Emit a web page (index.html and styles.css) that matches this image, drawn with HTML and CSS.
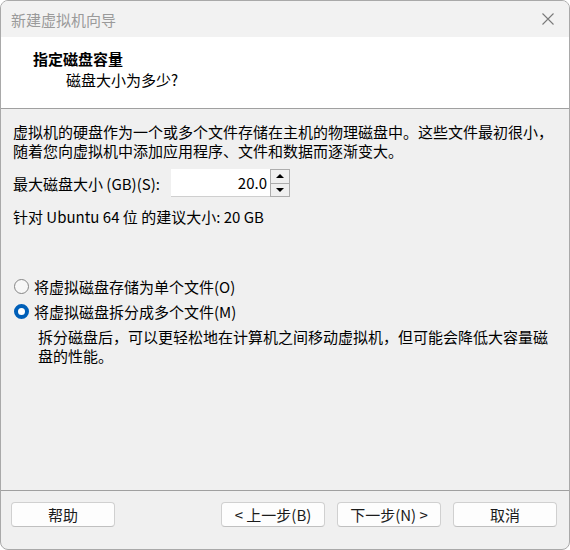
FILE: index.html
```html
<!DOCTYPE html>
<html lang="zh-CN">
<head>
<meta charset="utf-8">
<title>新建虚拟机向导</title>
<link rel="stylesheet" href="styles.css">
</head>
<body>
<div class="window">
  <div class="titlebar">
    <span class="title">新建虚拟机向导</span>
    <svg class="close" width="12" height="12" viewBox="0 0 12 12"><path d="M0.5 0.5 L11.5 11.5 M11.5 0.5 L0.5 11.5" stroke="#7a7a7a" stroke-width="1.1" fill="none"/></svg>
  </div>
  <div class="header">
    <div class="h-title">指定磁盘容量</div>
    <div class="h-sub">磁盘大小为多少?</div>
  </div>
  <div class="content">
    <p class="intro">虚拟机的硬盘作为一个或多个文件存储在主机的物理磁盘中。这些文件最初很小，<br>随着您向虚拟机中添加应用程序、文件和数据而逐渐变大。</p>
    <div class="size-row">
      <span class="size-label">最大磁盘大小 (GB)(S):</span>
      <div class="spin">
        <div class="spin-input">20.0</div>
        <div class="spin-btns">
          <div class="spin-btn"><span class="tri-up"></span></div>
          <div class="spin-btn"><span class="tri-down"></span></div>
        </div>
      </div>
    </div>
    <p class="rec">针对 Ubuntu 64 位 的建议大小: 20 GB</p>
    <div class="options">
      <div class="option"><span class="radio"></span><span>将虚拟磁盘存储为单个文件(O)</span></div>
      <div class="option"><span class="radio checked"></span><span>将虚拟磁盘拆分成多个文件(M)</span></div>
    </div>
    <p class="desc">拆分磁盘后，可以更轻松地在计算机之间移动虚拟机，但可能会降低大容量磁<br>盘的性能。</p>
  </div>
  <div class="footer">
    <div class="btn">帮助</div>
    <div class="btn push">&lt; 上一步(B)</div>
    <div class="btn">下一步(N) &gt;</div>
    <div class="btn">取消</div>
  </div>
</div>
</body>
</html>
```
FILE: styles.css
```css
html, body {
  margin: 0;
  padding: 0;
  background: #ffffff;
}
body {
  font-family: "Noto Sans CJK SC", "Noto Sans", sans-serif;
  font-size: 15px;
  line-height: 19px;
  color: #000;
}
p { margin: 0; }
.window {
  width: 570px;
  height: 550px;
  box-sizing: border-box;
  border: 1px solid #a9a9a9;
  border-radius: 8px;
  overflow: hidden;
  background: #f0f0f0;
  display: flex;
  flex-direction: column;
}
.titlebar {
  height: 36px;
  flex: none;
  display: flex;
  align-items: center;
  justify-content: space-between;
  padding: 0 15px 0 10px;
  background: #f2f2f2;
}
.title {
  color: #9a9a9a;
}
.close { display: block; }
.header {
  height: 72px;
  flex: none;
  box-sizing: border-box;
  background: #fff;
  border-bottom: 1px solid #a0a0a0;
  padding: 12px 0 0 32px;
}
.h-title { font-weight: bold; }
.h-sub { margin: 2px 0 0 33px; }
.content {
  flex: 1;
  padding: 13px 0 0 12px;
  white-space: nowrap;
}
.size-row {
  display: flex;
  align-items: center;
  gap: 8px;
  margin-top: 9px;
  height: 28px;
}
.size-label {
  width: 150px;
}
.spin {
  display: flex;
  height: 28px;
}
.spin-input {
  width: 99px;
  box-sizing: border-box;
  background: #fff;
  border-bottom: 1px solid #cfcfcf;
  text-align: right;
  padding-right: 3px;
  line-height: 27px;
}
.spin-btns {
  width: 20px;
  box-sizing: border-box;
  border: 1px solid #adadad;
  display: flex;
  flex-direction: column;
  background: #f0f0f0;
}
.spin-btn {
  flex: 1;
  display: flex;
  align-items: center;
  justify-content: center;
}
.spin-btn + .spin-btn { border-top: 1px solid #adadad; }
.tri-up, .tri-down {
  width: 0; height: 0;
  border-left: 4px solid transparent;
  border-right: 4px solid transparent;
}
.tri-up { border-bottom: 4px solid #000; }
.tri-down { border-top: 4px solid #000; }
.rec { margin-top: 10px; }
.options { margin-top: 48px; }
.option {
  display: flex;
  align-items: center;
  gap: 5px;
  height: 25px;
}
.radio {
  width: 15px;
  height: 15px;
  box-sizing: border-box;
  border-radius: 50%;
  border: 1px solid #858585;
  background: #f7f7f7;
  margin-left: 1px;
}
.radio.checked {
  border: 4.5px solid #005fb8;
  background: #fff;
}
.desc {
  margin: 3px 0 0 25px;
}
.footer {
  height: 47px;
  flex: none;
  border-top: 1px solid #a0a0a0;
  display: flex;
  align-items: flex-start;
  gap: 12px;
  padding: 11px 12px 0 10px;
}
.btn {
  width: 104px;
  height: 25px;
  box-sizing: border-box;
  border: 1px solid #d0d0d0;
  border-bottom-color: #c0c0c0;
  border-radius: 4px;
  background: #fdfdfd;
  text-align: center;
  line-height: 23px;
  color: #1b1b1b;
}
.push { margin-left: auto; }
```
